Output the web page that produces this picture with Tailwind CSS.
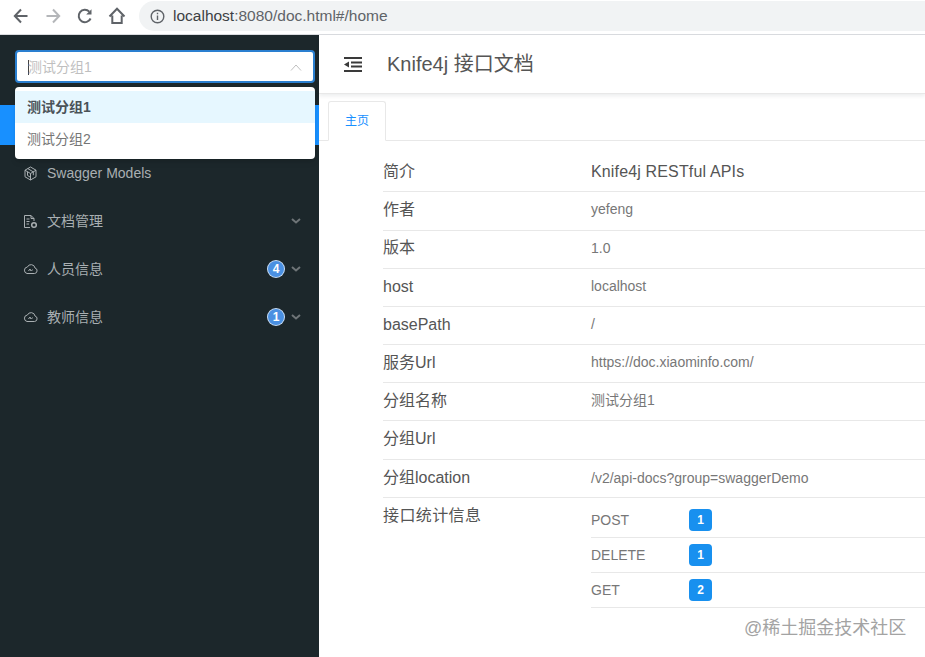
<!DOCTYPE html>
<html lang="zh-CN">
<head>
  <meta charset="UTF-8">
  <title>Knife4j 接口文档</title>
  <script src="https://cdn.jsdelivr.net/npm/@tailwindcss/browser@4"></script>
</head>
<body class="w-[925px] h-[657px] overflow-hidden bg-white font-['Liberation_Sans','Noto_Sans_CJK_SC',sans-serif]">
  <!-- browser toolbar -->
  <div class="h-[35px] flex items-center border-b border-[#dadce0] bg-white pb-[2px]">
    <div class="flex items-center w-[139px] pl-[12px] gap-[14px] shrink-0">
      <svg class="w-[18px] h-[18px]" viewBox="0 0 18 18" fill="none" stroke="#5f6368" stroke-width="2"><path d="M15.5 9H3M9 2.5 2.8 9 9 15.500"/></svg>
      <svg class="w-[18px] h-[18px]" viewBox="0 0 18 18" fill="none" stroke="#b4b6b9" stroke-width="2"><path d="M2.500 9H15M9 2.500 15.200 9 9 15.500"/></svg>
      <svg class="w-[18px] h-[18px]" viewBox="0 0 18 18" fill="none" stroke="#5f6368" stroke-width="2"><path d="M14.600 11.500A6.200 6.200 0 1 1 13.300 4.600"/><path d="M15.500 2.200v5.300h-5.300z" fill="#5f6368" stroke="none"/></svg>
      <svg class="w-[18px] h-[18px]" viewBox="0 0 18 18" fill="none" stroke="#5f6368" stroke-width="2"><path d="M1.500 9.500 9 1.800l7.500 7.700M4.300 8.500v7.500h9.400V8.500"/></svg>
    </div>
    <div class="flex-1 h-[30px] bg-[#f1f3f4] rounded-l-[15px] flex items-center pl-[11px] gap-[8px]">
      <svg class="w-[15px] h-[15px]" viewBox="0 0 15 15" fill="none" stroke="#5f6368" stroke-width="1.400"><circle cx="7.500" cy="7.500" r="6.300"/><path d="M7.500 6.500v4.500M7.500 3.800v1.500"/></svg>
      <span class="text-[15.500px] text-[#5f6368]"><span class="text-[#3c4043]">localhost</span>:8080/doc.html#/home</span>
    </div>
  </div>

  <div class="flex h-[622px]">
    <!-- sidebar -->
    <aside class="relative w-[319px] shrink-0 bg-[#1c272b] pt-[70px]">
      <div class="h-[40px] bg-[#1890ff]"></div>
      <nav class="pt-[4px] text-[14px] text-[#a9afb2]">
        <div class="h-[48px] flex items-center pl-[23px]">
          <svg class="w-[15px] h-[15px] mr-[9px]" viewBox="0 0 15 15" fill="none" stroke="#a9afb2" stroke-width="1"><path d="M7.500 1 13 4.200v6.600L7.500 14 2 10.800V4.200zM2 4.200l5.500 3.300L13 4.200M7.500 7.500V14M4.800 2.600l5.500 3.300v3.300M4.500 6v3.500l3 1.800"/></svg>
          <span>Swagger Models</span>
        </div>
        <div class="h-[48px] flex items-center pl-[23px] pr-[18px]">
          <svg class="w-[15px] h-[15px] mr-[9px]" viewBox="0 0 15 15" fill="none" stroke="#a9afb2" stroke-width="1"><path d="M7 13.500H1.500v-12h6.500l3 3v2.500M8 1.500v3h3M3.500 5h3M3.500 7.500h3M3.500 10h2.500"/><circle cx="11" cy="11" r="2.300" stroke-width="1.500"/></svg>
          <span>文档管理</span>
          <svg class="w-[10px] h-[6px] ml-auto" viewBox="0 0 10 6" fill="none" stroke="#6e7477" stroke-width="2"><path d="m1 1 4 3.500L9 1"/></svg>
        </div>
        <div class="h-[48px] flex items-center pl-[23px] pr-[18px]">
          <svg class="w-[15px] h-[15px] mr-[9px]" viewBox="0 0 15 15" fill="none" stroke="#a9afb2" stroke-width="1"><path d="M4 11.500h7.500a2.800 2.800 0 0 0 .5-5.500 4 4 0 0 0-7.600-1A3.300 3.300 0 0 0 4 11.500zM5.500 9l1.500-2 1 2M8.500 9l1-1.500"/></svg>
          <span>人员信息</span>
          <span class="ml-auto mr-[6px] w-[18px] h-[18px] rounded-full bg-[#4a90e2] border border-white/70 flex items-center justify-center text-white text-[12px] font-bold">4</span>
          <svg class="w-[10px] h-[6px]" viewBox="0 0 10 6" fill="none" stroke="#6e7477" stroke-width="2"><path d="m1 1 4 3.500L9 1"/></svg>
        </div>
        <div class="h-[48px] flex items-center pl-[23px] pr-[18px]">
          <svg class="w-[15px] h-[15px] mr-[9px]" viewBox="0 0 15 15" fill="none" stroke="#a9afb2" stroke-width="1"><path d="M4 11.500h7.500a2.800 2.800 0 0 0 .5-5.500 4 4 0 0 0-7.600-1A3.300 3.300 0 0 0 4 11.500zM5.500 9l1.500-2 1 2M8.500 9l1-1.500"/></svg>
          <span>教师信息</span>
          <span class="ml-auto mr-[6px] w-[18px] h-[18px] rounded-full bg-[#4a90e2] border border-white/70 flex items-center justify-center text-white text-[12px] font-bold">1</span>
          <svg class="w-[10px] h-[6px]" viewBox="0 0 10 6" fill="none" stroke="#6e7477" stroke-width="2"><path d="m1 1 4 3.500L9 1"/></svg>
        </div>
      </nav>

      <!-- open select, lies over the menu -->
      <div class="absolute left-[15px] top-[15px] w-[300px]">
        <div class="h-[33px] bg-white rounded border-2 border-[#2a7fd0] flex items-center px-[11px] pt-[1px] text-[14px] text-[#bfbfbf]">
          <span class="w-px h-[15px] bg-[#444] -mr-px"></span>
          <span>测试分组1</span>
          <svg class="w-[12px] h-[7px] ml-auto" viewBox="0 0 12 7" fill="none" stroke="#bfbfbf" stroke-width="1"><path d="m1 6.500 5-5.500 5 5.500"/></svg>
        </div>
        <div class="mt-[4px] h-[72px] bg-white rounded py-[4px] text-[14px] shadow-md">
          <div class="h-[32px] bg-[#e6f7ff] flex items-center pl-[12px] font-bold text-[#4a5257]">测试分组1</div>
          <div class="h-[32px] flex items-center pl-[12px] text-[#757575]">测试分组2</div>
        </div>
      </div>
    </aside>

    <!-- main -->
    <main class="flex-1 min-w-0 relative">
      <header class="h-[59px] flex items-center pl-[25px] border-b border-[#e8e8e8] shadow-[0_2px_4px_rgba(0,21,41,0.08)]">
        <svg class="w-[18px] h-[15px] mr-[25px]" viewBox="0 0 18 15" fill="none" stroke="#3a3a3a" stroke-width="2"><path d="M0 1h18M7 5.500h11M7 9.500h11M0 14h18"/><path d="M5 4.500v6L0 7.500z" fill="#3a3a3a" stroke="none"/></svg>
        <h1 class="text-[20px] text-[#555]">Knife4j 接口文档</h1>
      </header>
      <div class="pt-[7px]">
        <div class="h-[40px] border-b border-[#e8e8e8] pl-[9px]">
          <div class="w-[58px] h-[40px] bg-white border border-[#e8e8e8] border-b-white rounded-t-[3px] flex items-center justify-center text-[12px] text-[#1890ff]">主页</div>
        </div>
      </div>
      <section class="pl-[64px] pt-[12px] text-[#555] text-[16px]">
        <div class="h-[39px] flex items-center border-b border-[#e8e8e8]">
          <div class="w-[208px]">简介</div><div class="tracking-[0.15px]">Knife4j RESTful APIs</div>
        </div>
        <div class="h-[38.500px] flex items-center border-b border-[#e8e8e8]">
          <div class="w-[208px] pb-[2px]">作者</div><div class="text-[14px] text-[#777] pb-[2px]">yefeng</div>
        </div>
        <div class="h-[38px] flex items-center border-b border-[#e8e8e8]">
          <div class="w-[208px] pb-[2px]">版本</div><div class="text-[14px] text-[#777] pb-[2px]">1.0</div>
        </div>
        <div class="h-[38px] flex items-center border-b border-[#e8e8e8]">
          <div class="w-[208px]">host</div><div class="text-[14px] text-[#777] pb-[2px]">localhost</div>
        </div>
        <div class="h-[38px] flex items-center border-b border-[#e8e8e8]">
          <div class="w-[208px]">basePath</div><div class="text-[14px] text-[#777] pb-[2px]">/</div>
        </div>
        <div class="h-[38px] flex items-center border-b border-[#e8e8e8]">
          <div class="w-[208px]">服务Url</div><div class="text-[14px] text-[#777] pb-[2px]">https://doc.xiaominfo.com/</div>
        </div>
        <div class="h-[38px] flex items-center border-b border-[#e8e8e8]">
          <div class="w-[208px]">分组名称</div><div class="text-[14px] text-[#777] pb-[2px]">测试分组1</div>
        </div>
        <div class="h-[39px] flex items-center border-b border-[#e8e8e8]">
          <div class="w-[208px] pb-[2px]">分组Url</div>
        </div>
        <div class="h-[38px] flex items-center border-b border-[#e8e8e8]">
          <div class="w-[208px]">分组location</div><div class="text-[14px] text-[#777]">/v2/api-docs?group=swaggerDemo</div>
        </div>
        <div class="flex">
          <div class="w-[208px] pt-[6px] tracking-[0.4px]">接口统计信息</div>
          <div class="flex-1 pt-[5px] text-[14px] text-[#777]">
            <div class="h-[35px] flex items-center border-b border-[#e8e8e8]">
              <span class="w-[98px] pt-[2px]">POST</span><span class="w-[23px] h-[22px] rounded bg-[#1890ef] text-white text-[12px] font-bold flex items-center justify-center">1</span>
            </div>
            <div class="h-[35px] flex items-center border-b border-[#e8e8e8]">
              <span class="w-[98px] pt-[2px]">DELETE</span><span class="w-[23px] h-[22px] rounded bg-[#1890ef] text-white text-[12px] font-bold flex items-center justify-center">1</span>
            </div>
            <div class="h-[35px] flex items-center border-b border-[#e8e8e8]">
              <span class="w-[98px] pt-[2px]">GET</span><span class="w-[23px] h-[22px] rounded bg-[#1890ef] text-white text-[12px] font-bold flex items-center justify-center">2</span>
            </div>
          </div>
        </div>
      </section>
      <!-- watermark -->
      <div class="absolute left-[425px] top-[580px] text-[18px] text-[#a3a3a3]">@稀土掘金技术社区</div>
    </main>
  </div>
</body>
</html>
